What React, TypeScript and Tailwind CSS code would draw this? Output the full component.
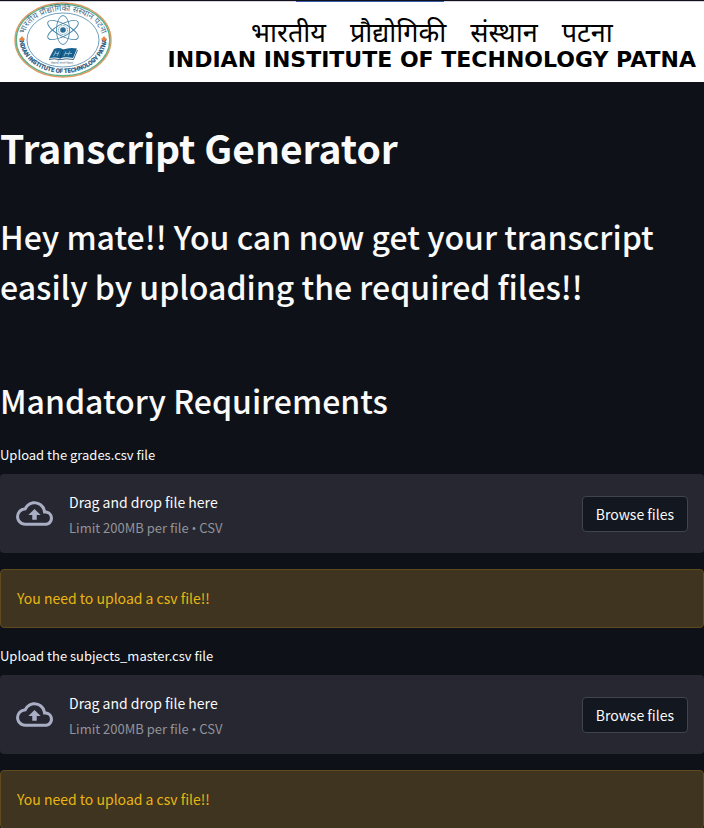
import { useId } from "react";

function Seal() {
  return (
    <svg viewBox="0 0 98 76" className="h-[76px] w-[98px] shrink-0" role="img" aria-label="Institute seal">
      <defs>
        <path id="seal-top" d="M 9.500 38 A 39.500 29 0 0 1 88.500 38" />
        <path id="seal-bottom" d="M 5.500 36 A 43.500 35 0 0 0 92.500 36" />
      </defs>
      <ellipse cx="49" cy="38" rx="48" ry="37" fill="#fff" stroke="#e39a63" strokeWidth="1.4" />
      <ellipse cx="49" cy="38" rx="46.800" ry="35.800" fill="none" stroke="#5fae84" strokeWidth="1.4" />
      <ellipse cx="49" cy="38" rx="36" ry="27" fill="none" stroke="#4f86a8" strokeWidth="0.8" />
      <text fill="#3c6f92" fontSize="8.400" fontFamily="Noto Sans, sans-serif">
        <textPath href="#seal-top" startOffset="50%" textAnchor="middle">भारतीय प्रौद्योगिकी संस्थान पटना</textPath>
      </text>
      <text fill="#1d5580" stroke="#1d5580" strokeWidth="0.2" fontSize="6" fontWeight="700" fontFamily="Liberation Sans Narrow, Roboto, sans-serif">
        <textPath href="#seal-bottom" startOffset="50%" textAnchor="middle">INDIAN INSTITUTE OF TECHNOLOGY PATNA</textPath>
      </text>
      <path d="M8 34 L9.300 35.700 L11 37 L9.300 38.300 L8 40 L6.700 38.300 L5 37 L6.700 35.700 Z" fill="#e8843c" />
      <path d="M90 34 L91.300 35.700 L93 37 L91.300 38.300 L90 40 L88.700 38.300 L87 37 L88.700 35.700 Z" fill="#e8843c" />
      <g fill="none" stroke="#4484a8" strokeWidth="0.9">
        <ellipse cx="49" cy="28" rx="6.500" ry="14.500" />
        <ellipse cx="49" cy="28" rx="6" ry="17" transform="rotate(62 49 28)" />
        <ellipse cx="49" cy="28" rx="6" ry="17" transform="rotate(-62 49 28)" />
        <circle cx="49" cy="28" r="4.500" strokeDasharray="1 0.7" />
      </g>
      <circle cx="49" cy="28" r="2.800" fill="#2b6c94" />
      <path d="M40 47 Q45 45 49 47.500 Q56 45 63 46.500 L59 56 Q51 54.500 46 56.500 Q40 54.500 35 56.500 Z" fill="#17618f" />
      <path d="M49 47.500 L46 56.500 M35 57.500 Q40 56 46 57.700 Q52 56 59.500 57.500 L63.500 48" fill="none" stroke="#0d3f66" strokeWidth="0.8" />
      <path d="M42 49 L39.500 54 M45 49.500 L43 54 M52 49.500 L50 54 M56 49 L54 53.500 M41 51.500 H45 M51 51.500 H58" stroke="#a9cbe0" strokeWidth="0.7" />
      <text x="48" y="61.500" textAnchor="middle" fontSize="3" fill="#56788f" fontFamily="Noto Sans, sans-serif">विद्यार्थी लभते विद्याम्</text>
    </svg>
  );
}

function Banner() {
  return (
    <header className="mt-px bg-white text-black">
      <div className="flex h-px bg-[#d9d3e4]">
        <span className="ml-[42%] w-[21%] bg-[#3b5ba9]" />
      </div>
      <div className="flex h-20 items-start justify-between pr-2 pl-3.5">
        <Seal />
        <div className="flex flex-col items-center pt-3.5 whitespace-nowrap">
          <p className="flex gap-6 font-['Noto_Sans','Noto_Sans_Devanagari',sans-serif] text-[27px] leading-8">
            <span>भारतीय</span>
            <span>प्रौद्योगिकी</span>
            <span>संस्थान</span>
            <span>पटना</span>
          </p>
          <p className="font-['DejaVu_Sans',sans-serif] text-[22px] leading-6 font-bold">
            INDIAN INSTITUTE OF TECHNOLOGY PATNA
          </p>
        </div>
      </div>
    </header>
  );
}

function FileUploader({ label }: { label: string }) {
  const id = useId();
  return (
    <section>
      <label htmlFor={id} className="block pb-[7px] text-[13px] leading-6">
        {label}
      </label>
      <div className="flex items-center rounded bg-[#262730] p-4">
        <input id={id} type="file" accept=".csv" className="hidden" />
        <svg viewBox="0 0 24 24" className="mr-4 size-[37px] shrink-0 fill-[#a9aec4]" aria-hidden="true">
          <path d="M19.350 10.040A7.490 7.490 0 0 0 12 4C9.110 4 6.600 5.640 5.350 8.040A5.994 5.994 0 0 0 0 14c0 3.310 2.690 6 6 6h13c2.760 0 5-2.240 5-5 0-2.640-2.050-4.780-4.650-4.960zM19 18H6c-2.210 0-4-1.790-4-4 0-2.050 1.530-3.760 3.560-3.970l1.070-.11.500-.95A5.469 5.469 0 0 1 12 6c2.620 0 4.880 1.860 5.390 4.430l.300 1.500 1.530.11A2.980 2.980 0 0 1 22 15c0 1.650-1.350 3-3 3zM8 13h2.550v3h2.900v-3H16l-4-4z" />
        </svg>
        <div className="flex flex-1 flex-col gap-1">
          <span className="text-[14px] leading-6">Drag and drop file here</span>
          <small className="text-[13px] leading-[19px] text-[#93949a]">
            Limit 200MB per file <span className="font-['Open_Sans',sans-serif] leading-none">•</span> CSV
          </small>
        </div>
        <button
          type="button"
          onClick={() => document.getElementById(id)?.click()}
          className="h-9 rounded border border-[#41444c] bg-[#13171f] px-[13px] text-[14px] leading-6"
        >
          Browse files
        </button>
      </div>
    </section>
  );
}

function Warning() {
  return (
    <div role="alert" className="rounded border border-[#5f4a1e] bg-[#3e341f] p-4 text-[14px] leading-[25px] text-[#eab614]">
      You need to upload a csv file!!
    </div>
  );
}

export default function App() {
  return (
    <div className="flow-root min-h-screen overflow-hidden bg-[#0e1117] font-['Noto_Sans_CJK_SC',sans-serif] text-[#fafafa]">
      <Banner />
      <main>
        <h1 className="pt-[39px] text-[39px] leading-[52px] font-bold">Transcript Generator</h1>
        <h2 className="pt-[38px] text-[32px] leading-[50px] font-medium">
          Hey mate!! You can now get your transcript easily by uploading the required files!!
        </h2>
        <h2 className="pt-16 pb-[18px] text-[32px] leading-[50px] font-medium">Mandatory Requirements</h2>
        <div className="flex flex-col gap-4">
          <FileUploader label="Upload the grades.csv file" />
          <Warning />
          <FileUploader label="Upload the subjects_master.csv file" />
          <Warning />
        </div>
      </main>
    </div>
  );
}
